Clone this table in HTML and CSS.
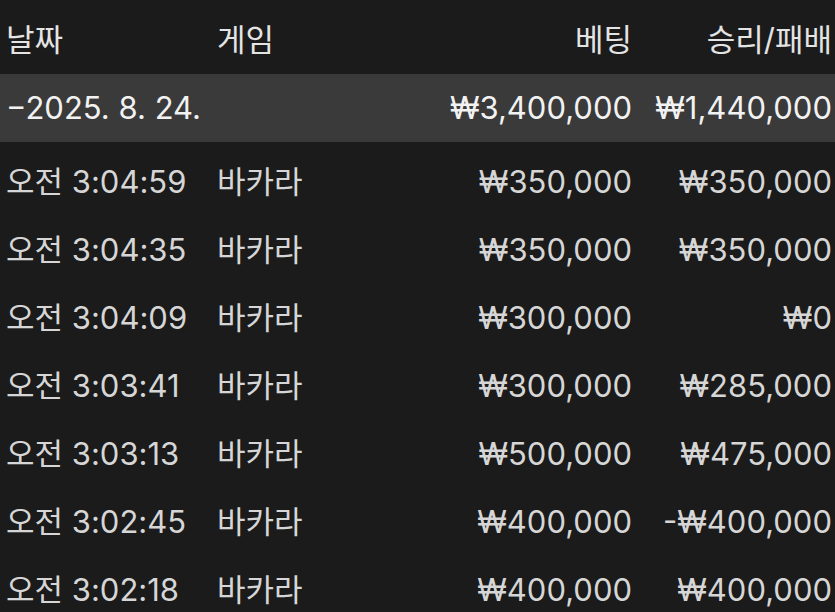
FILE: index.html
```html
<!DOCTYPE html>
<html lang="ko">
<head>
  <meta charset="UTF-8" />
  <meta name="viewport" content="width=device-width, initial-scale=1.0"/>
  <title>베팅 내역</title>
  <link rel="stylesheet" href="styles.css">
</head>
<body>

  <div class="table">
    <div class="row head">
      <div>날짜</div>
      <div>게임</div>
      <div class="num">베팅</div>
      <div class="num">승리/패배</div>
    </div>

    <!-- day group -->
    <div class="row group">
      <div>−2025. 8. 24.</div>
      <div></div>
      <div class="num">₩3,400,000</div>
      <div class="num">₩1,440,000</div>
    </div>

    <div class="rows">
      <div class="row">
        <div>오전 3:04:59</div>
        <div>바카라</div>
        <div class="num">₩350,000</div>
        <div class="num">₩350,000</div>
      </div>
      <div class="row">
        <div>오전 3:04:35</div>
        <div>바카라</div>
        <div class="num">₩350,000</div>
        <div class="num">₩350,000</div>
      </div>
      <div class="row">
        <div>오전 3:04:09</div>
        <div>바카라</div>
        <div class="num">₩300,000</div>
        <div class="num">₩0</div>
      </div>
      <div class="row">
        <div>오전 3:03:41</div>
        <div>바카라</div>
        <div class="num">₩300,000</div>
        <div class="num">₩285,000</div>
      </div>
      <div class="row">
        <div>오전 3:03:13</div>
        <div>바카라</div>
        <div class="num">₩500,000</div>
        <div class="num">₩475,000</div>
      </div>
      <div class="row">
        <div>오전 3:02:45</div>
        <div>바카라</div>
        <div class="num">₩400,000</div>
        <div class="num">-₩400,000</div>
      </div>
      <div class="row">
        <div>오전 3:02:18</div>
        <div>바카라</div>
        <div class="num">₩400,000</div>
        <div class="num">₩400,000</div>
      </div>
    </div>
  </div>

</body>
</html>
```

FILE: styles.css
```css
html, body {
  margin: 0;
  background-color: #1b1b1b;
}

body {
  font-family: Inter, "Noto Sans CJK KR", sans-serif;
  font-size: 31px;
  color: #d6d6d6;
  overflow: hidden;
}

.table {
  width: 835px;
}

.row {
  display: grid;
  grid-template-columns: 211px 150px 1fr 200px;
  align-items: center;
  height: 68px;
  padding: 0 3px 0 6px;
  white-space: nowrap;
  line-height: 1.2;
}

.num {
  text-align: right;
}

.row.head {
  height: 74px;
  padding-top: 6px;
  box-sizing: border-box;
  color: #e4e4e4;
}

.row.group {
  background-color: #3a3a3a;
  color: #f2f2f2;
}

.rows {
  margin-top: 6px;
}
```
